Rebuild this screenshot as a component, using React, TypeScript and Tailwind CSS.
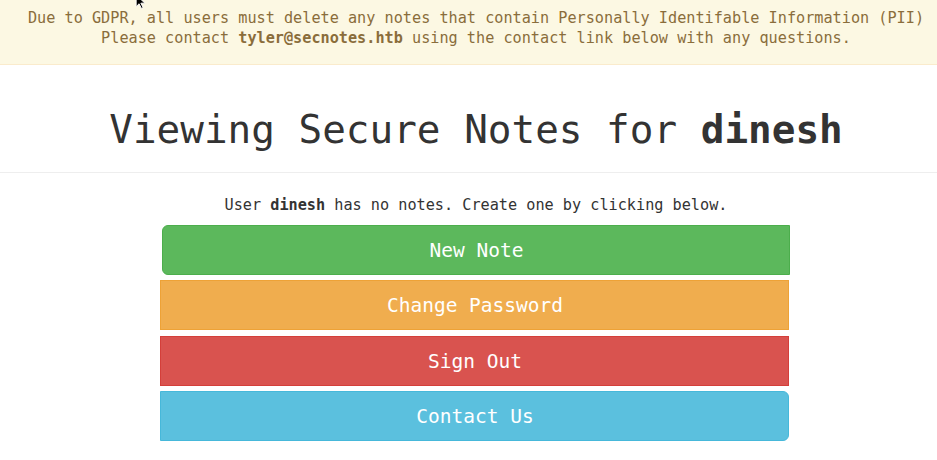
import React from "react";

const mono = { fontFamily: '"DejaVu Sans Mono", "Liberation Mono", monospace' };

const NoteButton = (props: any) => {
  return (
    <button
      type="button"
      className={`flex h-[50px] items-center justify-center border text-[19.5px] text-white ${props.classProperty}`}
    >
      <span className="pl-[1px] pt-[2px]">{props.text}</span>
    </button>
  );
};

const App = () => {
  return (
    <div className="relative min-h-[460px] w-full bg-white text-[#333]" style={mono}>
      {/* cursor left on the page */}
      <svg className="absolute left-[135px] top-[-5px]" width="14" height="14" viewBox="0 0 12 12">
        <path d="M1 0 L1 10 L3.5 7.5 L5.5 11.5 L7 10.8 L5 7 L8.5 7 Z" fill="#000" stroke="#fff" strokeWidth="0.8" />
      </svg>

      <div className="border-b border-[#faebcc] bg-[#fcf8e3] pb-[16px] pl-[15px] pt-[9px] text-center text-[15.2px] leading-[19.5px] text-[#8a6d3b]">
        <p>Due to GDPR, all users must delete any notes that contain Personally Identifable Information (PII)</p>
        <p>
          Please contact <b>tyler@secnotes.htb</b> using the contact link below with any questions.
        </p>
      </div>

      <h1 className="mt-[43px] pl-[15px] text-center text-[39.3px] leading-[43px] font-normal">
        Viewing Secure Notes for <b>dinesh</b>
      </h1>
      <hr className="mt-[21px] border-t border-[#eee]" />

      <p className="mt-[23px] pl-[15px] text-center text-[15.2px] leading-[19.5px]">
        User <b>dinesh</b> has no notes. Create one by clicking below.
      </p>

      <div className="ml-[160px] mt-[9px] flex w-[629px] flex-col">
        <NoteButton
          text="New Note"
          classProperty="ml-[2px] w-[628px] rounded-l-[6px] border-[#4cae4c] bg-[#5cb85c]"
        />
        <NoteButton
          text="Change Password"
          classProperty="mt-[5px] w-full border-[#eea236] bg-[#f0ad4e]"
        />
        <NoteButton
          text="Sign Out"
          classProperty="mt-[6px] w-full border-[#d43f3a] bg-[#d9534f]"
        />
        <NoteButton
          text="Contact Us"
          classProperty="mt-[5px] w-full rounded-r-[6px] border-[#46b8da] bg-[#5bc0de]"
        />
      </div>
    </div>
  );
};

export default App;
